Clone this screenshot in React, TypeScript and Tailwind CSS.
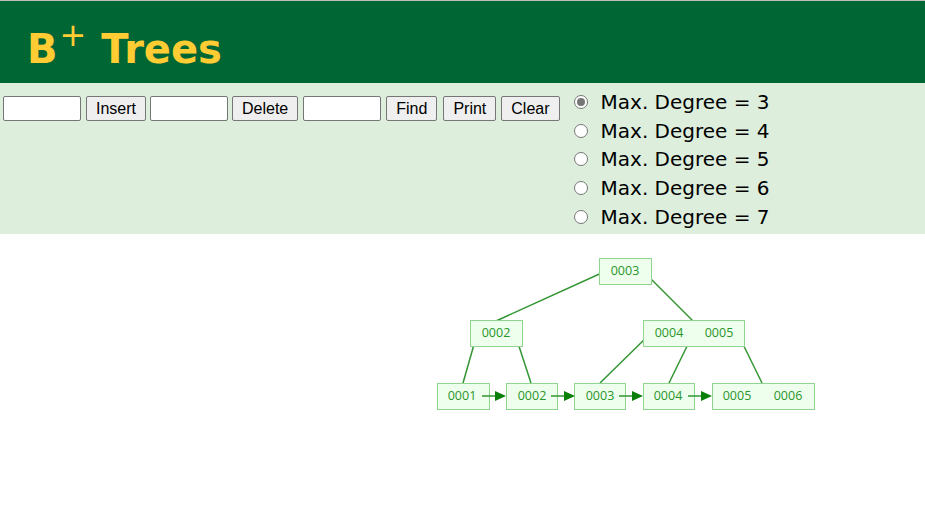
import React from "react";

const sans = { fontFamily: '"Liberation Sans", Arial, sans-serif' };
const verdana = { fontFamily: '"DejaVu Sans", Verdana, sans-serif' };

function Btn({ label, className = "" }: { label: string; className?: string }) {
  return (
    <button
      className={
        "h-[25px] px-[9px] border border-[#767676] rounded-[2px] bg-[#efefef] text-[16px] leading-none text-black " +
        className
      }
      style={sans}
    >
      {label}
    </button>
  );
}

function Field({ className = "" }: { className?: string }) {
  return (
    <input
      type="text"
      className={"w-[78px] h-[25px] border border-[#767676] rounded-[2px] bg-white px-1 " + className}
      style={sans}
    />
  );
}

function Radio({ checked, n }: { checked?: boolean; n: number }) {
  return (
    <div className="h-[28.6px] flex items-center">
      <span className="ml-[3px] w-[14px] h-[14px] rounded-full border border-[#767676] bg-white flex items-center justify-center">
        {checked && <span className="w-[8px] h-[8px] rounded-full bg-[#767676]" />}
      </span>
      <span className="ml-[13px] text-[20px] text-black leading-none" style={verdana}>
        Max. Degree = {n}
      </span>
    </div>
  );
}

const LINE = "#339533";
const ARROW = "#0a7f0a";

function Node({ x, y, w, labels }: { x: number; y: number; w: number; labels: { cx: number; t: string }[] }) {
  return (
    <g>
      <rect x={x + 0.5} y={y + 0.5} width={w} height={26} fill="#eeffee" stroke="#8fd48f" strokeWidth={1} />
      {labels.map((l) => (
        <text
          key={l.t + l.cx}
          x={l.cx}
          y={y + 17}
          textAnchor="middle"
          fontSize={12.5}
          fill="#2a952a"
          style={{ fontFamily: '"Open Sans", sans-serif' }}
        >
          {l.t}
        </text>
      ))}
    </g>
  );
}

function Arrow({ x1, x2, y }: { x1: number; x2: number; y: number }) {
  return (
    <g>
      <line x1={x1} y1={y} x2={x2 - 9} y2={y} stroke={LINE} strokeWidth={1.5} />
      <polygon points={`${x2 - 11},${y - 5} ${x2},${y} ${x2 - 11},${y + 5}`} fill={ARROW} />
    </g>
  );
}

export default function App() {
  const top = 234;
  const o = (yy: number) => yy - top;
  return (
    <div className="w-[925px] h-[516px] bg-white overflow-hidden">
      <div className="h-[1px] bg-[#bdbdbd]" />
      <div className="h-[82px] bg-[#006633] flex items-center pl-[27px]">
        <h1 className="text-[40px] font-bold text-[#ffcc33] leading-none mt-[14px]" style={verdana}>
          B<sup className="text-[32px] font-normal relative -top-[17px] ml-[2px] mr-[1px]">+</sup> Trees
        </h1>
      </div>
      <div className="h-[151px] bg-[#ddeedd] flex items-start">
        <div className="flex items-center mt-[13px] pl-[3px]">
          <Field />
          <Btn label="Insert" className="ml-[5px]" />
          <Field className="ml-[4px]" />
          <Btn label="Delete" className="ml-[4px]" />
          <Field className="ml-[5px]" />
          <Btn label="Find" className="ml-[5px]" />
          <Btn label="Print" className="ml-[6px]" />
          <Btn label="Clear" className="ml-[5px]" />
        </div>
        <div className="ml-[11px] mt-[5px] flex flex-col">
          <Radio checked n={3} />
          <Radio n={4} />
          <Radio n={5} />
          <Radio n={6} />
          <Radio n={7} />
        </div>
      </div>
      <svg width={925} height={282} className="block">
        <g stroke={LINE} strokeWidth={1.5}>
          <line x1={606} y1={o(271)} x2={496} y2={o(321)} />
          <line x1={644} y1={o(272)} x2={693} y2={o(321)} />
          <line x1={477} y1={o(334)} x2={463} y2={o(383)} />
          <line x1={515} y1={o(334)} x2={531} y2={o(383)} />
          <line x1={650} y1={o(334)} x2={600} y2={o(383)} />
          <line x1={693} y1={o(334)} x2={669} y2={o(383)} />
          <line x1={738} y1={o(334)} x2={762} y2={o(383)} />
        </g>
        <Node x={599} y={o(258)} w={52} labels={[{ cx: 625, t: "0003" }]} />
        <Node x={470} y={o(320)} w={52} labels={[{ cx: 496, t: "0002" }]} />
        <Node x={643} y={o(320)} w={101} labels={[{ cx: 669, t: "0004" }, { cx: 719, t: "0005" }]} />
        <Node x={437} y={o(383)} w={52} labels={[{ cx: 462, t: "0001" }]} />
        <Node x={506} y={o(383)} w={51} labels={[{ cx: 532, t: "0002" }]} />
        <Node x={574} y={o(383)} w={51} labels={[{ cx: 600, t: "0003" }]} />
        <Node x={643} y={o(383)} w={51} labels={[{ cx: 668, t: "0004" }]} />
        <Node x={712} y={o(383)} w={102} labels={[{ cx: 737, t: "0005" }, { cx: 788, t: "0006" }]} />
        <Arrow x1={482} x2={506} y={o(396)} />
        <Arrow x1={551} x2={575} y={o(396)} />
        <Arrow x1={619} x2={643} y={o(396)} />
        <Arrow x1={688} x2={712} y={o(396)} />
      </svg>
    </div>
  );
}
